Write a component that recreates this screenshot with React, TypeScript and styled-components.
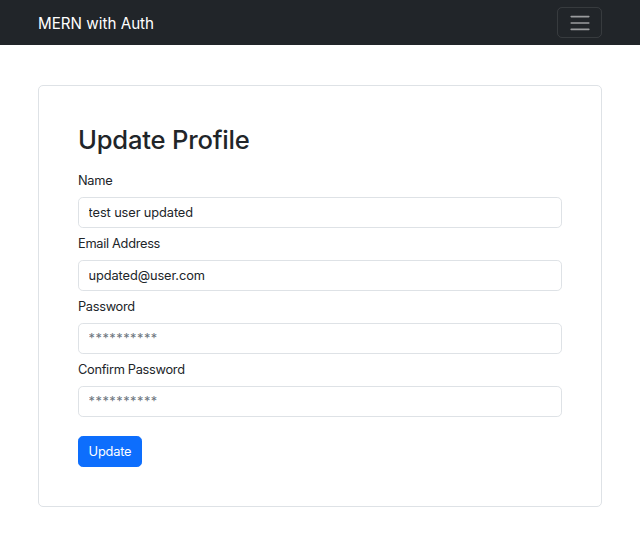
import * as React from 'react';
import styled, { createGlobalStyle } from 'styled-components';

const GlobalStyle = createGlobalStyle`
  html, body {
    margin: 0;
    padding: 0;
    background: #fff;
  }
  body {
    font-family: Inter, "Noto Sans", "Liberation Sans", sans-serif;
    font-size: 12.8px;
    line-height: 1.5;
    color: #212529;
  }
  * {
    box-sizing: border-box;
  }
`;

const Navbar = styled.nav`
  display: flex;
  align-items: center;
  justify-content: space-between;
  height: 45px;
  padding: 0 38px;
  background: #212529;
`;

const Brand = styled.a`
  padding-top: 3px;
  color: #fff;
  font-size: 15.2px;
  line-height: 1.5;
  text-decoration: none;
`;

const Toggler = styled.button`
  display: flex;
  align-items: center;
  justify-content: center;
  width: 45px;
  height: 31px;
  padding: 0;
  background: transparent;
  border: 1px solid rgba(255, 255, 255, 0.1);
  border-radius: 5px;
  cursor: pointer;
`;

const Main = styled.main`
  padding: 40px 38px;
`;

const Card = styled.div`
  padding: 39px 39px;
  background: #fff;
  border: 1px solid #dee2e6;
  border-radius: 5px;
`;

const Heading = styled.h2`
  margin: 0 0 15.5px;
  font-size: 25.6px;
  font-weight: 500;
  line-height: 1.2;
  letter-spacing: -0.2px;
`;

const Group = styled.div`
  display: flex;
  flex-direction: column;
  margin: 6.4px 0;
`;

const Label = styled.label`
  margin-bottom: 6.4px;
  font-size: 12.8px;
  line-height: 19.2px;
  letter-spacing: -0.3px;
`;

const Input = styled.input`
  height: 31px;
  padding: 4.8px 9.6px;
  font-family: inherit;
  font-size: 12.8px;
  letter-spacing: -0.1px;
  color: #212529;
  background: #fff;
  border: 1px solid #dee2e6;
  border-radius: 4.8px;
  outline: none;

  &::placeholder {
    color: #6c757d;
    letter-spacing: 0.5px;
  }
`;

const Button = styled.button<{ $variant?: 'primary' }>`
  align-self: flex-start;
  margin-top: 12.8px;
  height: 31px;
  padding: 0 9.6px;
  font-family: inherit;
  font-size: 12.8px;
  letter-spacing: -0.2px;
  color: #fff;
  background: #0d6efd;
  border: 1px solid #0d6efd;
  border-radius: 4.8px;
  cursor: pointer;
`;

const MenuIcon = () => (
  <svg width="24" height="24" viewBox="0 0 30 30">
    <path
      d="M4 7h22M4 15h22M4 23h22"
      stroke="rgba(255,255,255,0.55)"
      strokeWidth="2"
      strokeLinecap="round"
    />
  </svg>
);

type FieldProps = {
  label: string;
  type?: string;
  value?: string;
  placeholder?: string;
};

const Field = ({ label, type = 'text', value, placeholder }: FieldProps) => (
  <Group>
    <Label>{label}</Label>
    <Input type={type} defaultValue={value} placeholder={placeholder} />
  </Group>
);

export default function App() {
  return (
    <>
      <GlobalStyle />
      <Navbar>
        <Brand href="#">MERN with Auth</Brand>
        <Toggler aria-label="Toggle navigation">
          <MenuIcon />
        </Toggler>
      </Navbar>
      <Main>
        <Card>
          <Heading>Update Profile</Heading>
          <Field label="Name" value="test user updated" />
          <Field label="Email Address" type="email" value="updated@user.com" />
          <Field label="Password" placeholder="**********" />
          <Field label="Confirm Password" placeholder="**********" />
          <Button $variant="primary">Update</Button>
        </Card>
      </Main>
    </>
  );
}
